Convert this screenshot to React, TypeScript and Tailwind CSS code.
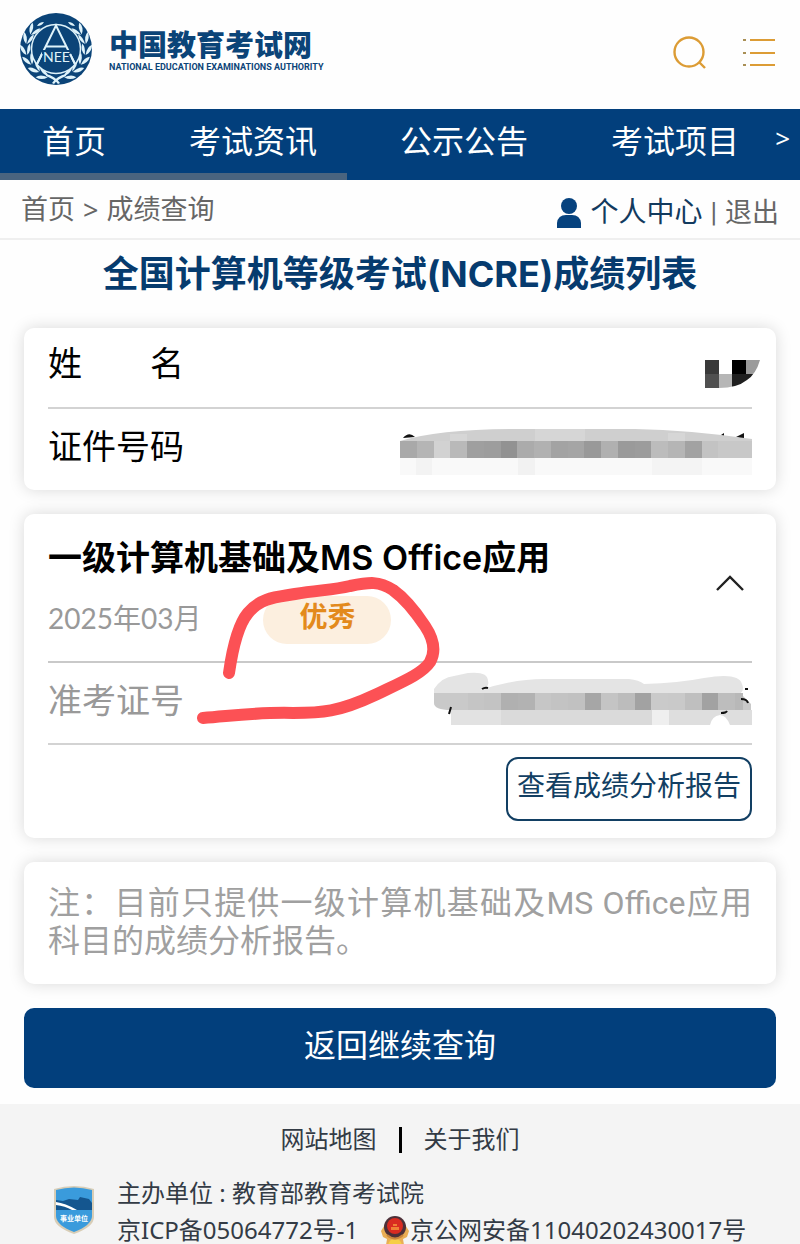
import type { ReactNode } from "react"

const navItems = ["首页", "考试资讯", "公示公告", "考试项目"]

const idCells = [
  "#a9a9a9", "#b5b5b5", "#d2d2d2", "#b9b9b9", "#9f9f9f", "#9d9d9d", "#929292",
  "#ababab", "#b1b1b1", "#a3a3a3", "#a5a5a5", "#999999", "#b0b0b0", "#9a9a9a",
  "#9c9c9c", "#bcbcbc", "#b5b5b5", "#a2a2a2", "#c3c3c3", "#c8c8c8", "#c8c8c8",
]

const ticketCells = [
  "#c9c9c9", "#c5c5c5", "#c3c3c3", "#b0b0b0", "#b2b2b2", "#c6c6c6", "#c3c3c3",
  "#c1c1c1", "#a6a6a6", "#c4c4c4", "#bcbcbc", "#a2a2a2", "#cacaca", "#c9c9c9",
  "#bfbfbf", "#a2a2a2", "#bdbdbd", "#b8b8b8",
]

// Leaf pairs of one laurel branch: x, y and the direction of growth
const leaves = [
  [25, 63, 205], [17, 57, 225], [10, 49, 245], [6, 39, 262], [7, 28, 285], [12, 19, 305],
]

function Laurel() {
  return (
    <g fill="#dff3fa">
      {leaves.map(([x, y, r]) => (
        <g key={y} transform={`translate(${x} ${y}) rotate(${r})`}>
          <path d="M-3 0 Q1 -6 8 -5 Q5 0 -3 0Z" />
          <path d="M-3 0.8 Q1 6 8 5 Q5 1 -3 0.8Z" />
        </g>
      ))}
      <path d="M17 13 Q19 9 24 9 Q22 13 17 13Z" />
      <path d="M26 61 Q35 63 40 70 L38 71 Q34 66 26 63Z" />
    </g>
  )
}

function Seal() {
  return (
    <svg viewBox="0 0 72 72" className="h-[72px] w-[72px] shrink-0" role="img" aria-label="NEEA">
      <circle cx="36" cy="36" r="36" fill="#0b4478" />
      <Laurel />
      <g transform="translate(72 0) scale(-1 1)">
        <Laurel />
      </g>
      <circle cx="36" cy="36" r="24.5" fill="#0b4478" stroke="#dff3fa" strokeWidth="1.5" />
      <path d="M17 51 L36 12.5 L55 51 M26 33.5 H46" fill="none" stroke="#dff3fa" strokeWidth="2" />
      <rect x="22" y="37" width="29" height="13" fill="#0b4478" />
      <path d="M22 41 L17 51 M50 41 L55 51" stroke="#dff3fa" strokeWidth="2" />
      <text x="36.5" y="49" textAnchor="middle" fontSize="14" fill="#dff3fa" className="font-['Lato',sans-serif]">
        NEE
      </text>
    </svg>
  )
}

function NameMosaic() {
  return (
    <svg viewBox="0 0 55 28" className="-mr-2 mt-4 h-7 w-[55px]" role="img" aria-label="姓名已隐藏">
      <clipPath id="name-clip">
        <path d="M0 0 H55 Q51 14 42 20 Q32 28 14 28 H0Z" />
      </clipPath>
      <g clipPath="url(#name-clip)" shapeRendering="crispEdges">
        <rect width="14" height="14" fill="#3a3a3a" />
        <rect y="14" width="14" height="14" fill="#505050" />
        <rect x="14" y="14" width="13" height="14" fill="#b6b6b6" />
        <rect x="27" width="14" height="14" fill="#000" />
        <rect x="27" y="14" width="28" height="14" fill="#1f1f1f" />
        <rect x="41" width="14" height="14" fill="#9b9b9b" />
      </g>
    </svg>
  )
}

function IdMosaic() {
  return (
    <svg viewBox="0 0 352 46" className="h-[46px] w-[352px]" role="img" aria-label="证件号码已隐藏">
      <path d="M3 9 Q9 2 15 8Z M318 8 L324 4 V9Z M336 8 L344 4 V10Z" fill="#111" />
      <path d="M0 12 Q40 0 120 0 H235 Q290 1 352 10 V12Z" fill="#cfcfcf" />
      <path d="M50 5 h17 v7 h-17z M135 0 h50 v12 h-50z M268 4 h17 v8 h-17z" fill="#d6d6d6" />
      <g shapeRendering="crispEdges">
        {idCells.map((fill, i) => (
          <rect key={i} x={i * 16.76} y="12" width="17" height="17" fill={fill} />
        ))}
        <rect y="29" width="352" height="17" fill="#f9f9f9" />
        <rect x="16" y="29" width="16" height="17" fill="#f3f3f3" />
        <rect x="118" y="29" width="17" height="17" fill="#f2f2f2" />
        <rect x="252" y="29" width="50" height="17" fill="#f4f4f4" />
      </g>
    </svg>
  )
}

function TicketMosaic() {
  return (
    <svg viewBox="0 0 318 56" className="-mt-3 h-14 w-[318px]" role="img" aria-label="准考证号已隐藏">
      <path d="M0 27 V20 Q8 8 20 7 L34 4 Q54 2 54 12 Q56 18 47 21 Q80 10 110 10 H195 Q205 11 210 15 Q245 14 270 9 Q305 3 308 15 Q312 24 300 27Z" fill="#e4e4e4" />
      <path d="M0 24 H306 L317 35 V41 H17 Q0 41 0 34Z" fill="#c9c9c9" />
      <g shapeRendering="crispEdges">
        {ticketCells.map((fill, i) => (
          <rect key={i} x={17 + i * 16.7} y="24" width={i === 17 ? 8 : 17} height="17" fill={fill} />
        ))}
        <rect x="17" y="41" width="50" height="15" fill="#e2e2e2" />
        <rect x="67" y="41" width="151" height="15" fill="#dadada" />
        <rect x="218" y="41" width="17" height="15" fill="#efefef" />
        <rect x="235" y="41" width="83" height="15" fill="#dedede" />
      </g>
      <path d="M276 56 Q278 47 286 46 Q292 46 296 56Z" fill="#fff" />
      <path d="M48 20 q3 -2 6 -1 M17 38 l-2 7 M287 44 q5 0 6 -2 M307 30 q6 0 7 4 M311 20 h3" fill="none" stroke="#111" strokeWidth="2" />
    </svg>
  )
}

function UnitShield() {
  return (
    <svg viewBox="0 0 42 50" className="h-[50px] w-[42px] shrink-0" role="img" aria-label="事业单位">
      <path d="M1 4 Q21 -2 41 4 V32 Q41 42 21 49 Q1 42 1 32Z" fill="#d8cdb6" />
      <path d="M3 5 Q21 0 39 5 V31 Q39 40 21 47 Q3 40 3 31Z" fill="#3a9bdc" />
      <path d="M3 15 L10 16 L16 14 L25 15 L27 12 L36 14 L39 18 V25 H3Z" fill="#14568f" />
      <path d="M3 17 Q12 18 24 25 L19 25 Q12 21 3 20Z" fill="#fff" />
      <text x="21" y="36" textAnchor="middle" fontSize="7" fontWeight="700" fill="#fff">
        事业单位
      </text>
    </svg>
  )
}

function PoliceBadge() {
  return (
    <svg viewBox="0 0 30 30" className="h-[30px] w-[30px] shrink-0" aria-hidden="true">
      <path d="M6 8 L1 16 L3 22 L7 24 L6 30 H24 L23 24 L27 22 L29 16 L24 8Z" fill="#e9ae55" />
      <path d="M8 30 Q10 23 15 25 Q20 23 22 30Z" fill="#f6cf45" />
      <circle cx="15" cy="12" r="11" fill="#4c3038" />
      <circle cx="15" cy="11" r="8" fill="#d92b21" />
      <path d="M11 12 H19 V15 H11Z M13 9 H17 V11 H13Z" fill="#f08036" />
      <path d="M7 20 Q15 27 23 20" fill="none" stroke="#c9853b" strokeWidth="2" />
    </svg>
  )
}

function Card({ children, className = "" }: { children: ReactNode; className?: string }) {
  return (
    <section className={`rounded-[10px] bg-white px-6 shadow-[0_0_16px_rgba(0,0,0,0.15)] ${className}`}>
      {children}
    </section>
  )
}

export default function App() {
  return (
    <div className="overflow-hidden bg-[#fefefe] font-['Roboto','Noto_Sans_CJK_SC',sans-serif] text-black">
      <header className="flex h-[109px] items-start justify-between pl-5 pr-6 pt-[13px]">
        <a href="#home" className="flex items-center gap-[17px]">
          <Seal />
          <span className="flex flex-col text-[#0b4478]">
            <span className="font-['Noto_Sans_CJK_SC',sans-serif] text-[29px] font-black leading-[36px]">中国教育考试网</span>
            <span className="font-['Roboto',sans-serif] text-[9px] font-bold leading-[12px]">
              NATIONAL EDUCATION EXAMINATIONS AUTHORITY
            </span>
          </span>
        </a>
        <div className="flex gap-9 pt-[22px]">
          <button type="button" aria-label="搜索">
            <svg viewBox="0 0 34 34" className="h-[34px] w-[34px]" fill="none" stroke="#dc9c35" strokeWidth="2.4">
              <circle cx="17" cy="17" r="14.5" />
              <path d="M27 27 L33 33" />
            </svg>
          </button>
          <button type="button" aria-label="菜单">
            <svg viewBox="0 0 34 34" className="h-[34px] w-[34px]" fill="none" stroke="#dc9c35" strokeWidth="2">
              <path d="M8 5 H33 M8 18 H33 M8 30 H33" />
              <path d="M1 5 H4 M1 18 H4 M1 30 H4" stroke="#a98f55" />
            </svg>
          </button>
        </div>
      </header>

      <nav className="bg-[#023f7c] text-white">
        <div className="flex h-16 items-center pl-[42px] pr-[10px] pt-[2px]">
          <div className="flex flex-1 gap-[83px] whitespace-nowrap text-[32px] leading-[40px]">
            {navItems.map((item) => (
              <a key={item} href="#nav">
                {item}
              </a>
            ))}
          </div>
          <button type="button" aria-label="更多" className="pb-2 font-['Noto_Sans',sans-serif] text-[26px] leading-[32px]">
            &gt;
          </button>
        </div>
        <div className="h-[7px] w-[43.4%] bg-[#4a647f]" />
      </nav>

      <div className="flex h-[60px] items-center justify-between border-b-2 border-[#efefef] px-[21px] text-[27px] leading-[36px] text-[#666]">
        <p className="flex gap-2 pt-[2px]">
          <a href="#home">首页</a>
          <span className="font-['Noto_Sans',sans-serif]">&gt;</span>
          <a href="#scores">成绩查询</a>
        </p>
        <div className="flex items-center pt-2">
          <svg viewBox="0 0 26 30" className="mr-2 h-[30px] w-[26px]" fill="#06427e" aria-hidden="true">
            <circle cx="13" cy="8" r="8" />
            <path d="M1 30 V25 Q2 17 10 17 H16 Q24 17 25 25 V30Z" />
          </svg>
          <a href="#account" className="text-[28px] text-[#123a5e]">个人中心</a>
          <span className="mx-2">|</span>
          <a href="#logout">退出</a>
        </div>
      </div>

      <main className="px-6 pb-4 pt-[10px]">
        <h1 className="text-center font-['Inter','Noto_Sans_CJK_SC',sans-serif] text-[36px] font-bold leading-[48px] text-[#063b6e]">
          全国计算机等级考试(NCRE)成绩列表
        </h1>

        <Card className="mt-[30px]">
          <dl className="text-[34px] leading-[40px]">
            <div className="flex h-[81px] items-start justify-between border-b-2 border-[#d3d3d3] pt-4">
              <dt>姓　　名</dt>
              <dd>
                <NameMosaic />
              </dd>
            </div>
            <div className="flex h-[81px] items-start justify-between pt-[18px]">
              <dt>证件号码</dt>
              <dd className="pt-[2px]">
                <IdMosaic />
              </dd>
            </div>
          </dl>
        </Card>

        <Card className="relative mt-6">
          <div className="flex h-[149px] items-center justify-between border-b-2 border-[#c9c9c9] pt-[2px]">
            <div>
              <h2 className="font-['Inter','Noto_Sans_CJK_SC',sans-serif] text-[34px] font-semibold leading-[48px]">
                一级计算机基础及MS Office应用
              </h2>
              <p className="mt-[14px] flex items-start gap-[62px] text-[28px] text-[#999]">
                <span className="font-['Lato','Noto_Sans_CJK_SC',sans-serif] leading-[44px]">2025年03月</span>
                <strong className="w-32 rounded-full bg-[#fcefdf] pb-1 text-center font-bold leading-[44px] text-[#e38a1c]">
                  优秀
                </strong>
              </p>
            </div>
            <button type="button" aria-label="收起" className="mr-2 pb-3">
              <svg viewBox="0 0 28 16" className="h-4 w-7" fill="none" stroke="#222" strokeWidth="2.4">
                <path d="M1 15 L14 2 L27 15" />
              </svg>
            </button>
          </div>
          <dl className="flex h-[82px] items-center justify-between border-b-2 border-[#d3d3d3] text-[34px] leading-[40px] text-[#999]">
            <dt className="pb-1">准考证号</dt>
            <dd>
              <TicketMosaic />
            </dd>
          </dl>
          <div className="flex justify-end pb-[17px] pt-3">
            <button
              type="button"
              className="h-16 rounded-xl border-2 border-[#123f63] px-[9px] pb-1 text-[28px] leading-[40px] text-[#123f63]"
            >
              查看成绩分析报告
            </button>
          </div>
          {/* Hand-drawn marker around the grade */}
          <svg
            viewBox="0 0 250 150"
            className="pointer-events-none absolute left-[171px] top-[61px] h-[150px] w-[250px]"
            fill="none"
            stroke="#fc5155"
            strokeWidth="12"
            strokeLinecap="round"
            strokeLinejoin="round"
            aria-hidden="true"
          >
            <path d="M34 98 C37 77 42 51 53 38 C66 22 83 22 100 19 C124 15 138 15 155 11 C175 7 184 6 198 15 C212 25 222 39 230 51 C240 66 240 78 235 87 C227 99 207 107 180 120 C144 137 126 138 98 138 C66 137 45 140 8 143" />
          </svg>
        </Card>

        <Card className="mt-6 pb-6 pt-[22px]">
          <p className="text-justify text-[32px] leading-[38px] text-[#a0a0a0]">
            注：目前只提供一级计算机基础及MS Office应用科目的成绩分析报告。
          </p>
        </Card>

        <button type="button" className="mt-6 h-20 w-full rounded-[10px] bg-[#023f7c] pb-1 text-[32px] leading-[40px] text-white">
          返回继续查询
        </button>
      </main>

      <footer className="bg-[#f4f4f4] pt-5 text-[24px] text-[#333b45]">
        <div className="flex items-center justify-center gap-[22px] leading-[32px]">
          <a href="#sitemap">网站地图</a>
          <span className="h-[26px] w-[3px] bg-black" />
          <a href="#about">关于我们</a>
        </div>
        <div className="mt-[22px] flex gap-[22px] pl-[53px]">
          <div className="pt-[7px]">
            <UnitShield />
          </div>
          <div className="whitespace-nowrap font-['Noto_Sans','Noto_Sans_CJK_SC',sans-serif] leading-[30px]">
            <p>主办单位 : 教育部教育考试院</p>
            <p className="mt-2 flex h-7 items-center">
              <a href="#icp">京ICP备05064772号-1</a>
              <a href="#police" className="ml-[22px] flex items-center">
                <PoliceBadge />
                京公网安备11040202430017号
              </a>
            </p>
          </div>
        </div>
      </footer>
    </div>
  )
}
